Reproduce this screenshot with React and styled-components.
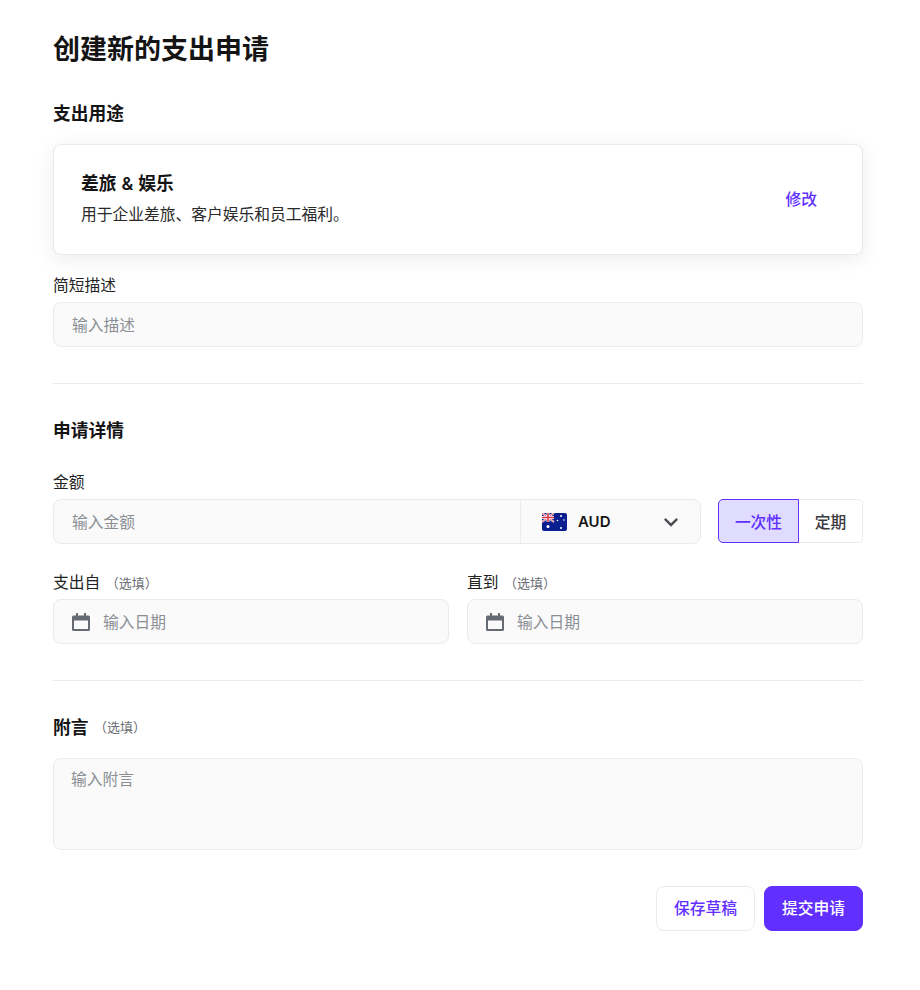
import React from 'react';
import styled, { createGlobalStyle } from 'styled-components';
import { MdKeyboardArrowDown } from 'react-icons/md';

const FONT = `Inter, "Noto Sans CJK SC", sans-serif`;

const GlobalStyle = createGlobalStyle`
  * { box-sizing: border-box; }
  body {
    margin: 0;
    background: #fff;
    color: #141414;
    font-family: ${FONT};
  }
  input, textarea, button { font-family: ${FONT}; }
  input::placeholder, textarea::placeholder { color: #8a8f94; opacity: 1; }
`;

const Page = styled.div`
  width: 920px;
  padding: 30px 57px 0 53px;
`;

const Title = styled.h1`
  margin: 0 0 31px;
  font-size: 27px;
  line-height: 40px;
  font-weight: 700;
`;

const SectionTitle = styled.h2`
  margin: 0;
  font-size: 17.75px;
  line-height: 26px;
  font-weight: 600;
`;

const Card = styled.div`
  display: flex;
  align-items: center;
  justify-content: space-between;
  height: 111px;
  margin-top: 17px;
  padding: 0 30px 0 27px;
  border: 1px solid #e9e9ee;
  border-radius: 8px;
  background: #fff;
  box-shadow: 0 4px 20px rgba(0, 0, 0, 0.08);
`;

const CardBody = styled.div`
  margin-bottom: 2px;
`;

const CardTitle = styled.div`
  font-size: 17.75px;
  line-height: 26px;
  font-weight: 600;
  word-spacing: 0.5px;
`;

const CardDesc = styled.div`
  margin-top: 7px;
  font-size: 15.75px;
  line-height: 22px;
  color: #2a2a2a;
`;

const LinkButton = styled.button`
  padding: 0 15px 2px;
  border: 0;
  background: none;
  color: #612fff;
  font-size: 15.75px;
  font-weight: 500;
`;

const Field = styled.div`
  display: flex;
  flex-direction: column;
  min-width: 0;
  flex: ${p => p.$flex || 'none'};
`;

const Label = styled.label`
  display: flex;
  align-items: baseline;
  height: 24px;
  margin: 2px 0 4px;
  font-size: 15.75px;
  line-height: 24px;
  color: #222;
`;

const Optional = styled.span`
  margin-left: 5.5px;
  font-size: 13px;
  color: #6a6e74;
`;

const InputBox = styled.div`
  display: flex;
  align-items: center;
  height: 45px;
  border: 1px solid #ebebef;
  border-radius: 8px;
  background: #fafafa;
  overflow: hidden;
`;

const TextInput = styled.input`
  flex: 1;
  min-width: 0;
  height: 100%;
  padding: 1px 18px 0;
  border: 0;
  outline: 0;
  background: none;
  font-size: 15.75px;
  color: #141414;
`;

const CurrencyPicker = styled.div`
  display: flex;
  align-items: center;
  width: 180px;
  height: 100%;
  padding: 0 15px 0 21px;
  border-left: 1px solid #ebebef;
  font-size: 15px;
  font-weight: 600;
  color: #141414;
`;

const CurrencyCode = styled.span`
  flex: 1;
  margin-left: 11px;
`;

const Chevron = styled(MdKeyboardArrowDown)`
  width: 28px;
  height: 28px;
  color: #4a4d52;
`;

const Divider = styled.hr`
  margin: 36px 0 34px;
  border: 0;
  border-top: 1px solid #e9e9ee;
`;

const Row = styled.div`
  display: flex;
  align-items: flex-start;
  gap: ${p => p.$gap || 18}px;
  margin-top: ${p => p.$top || 0}px;
`;

const Toggle = styled.div`
  display: flex;
  margin-top: 30px;
`;

const ToggleOption = styled.button`
  height: 44px;
  padding: 0;
  width: ${p => (p.$active ? 81 : 64)}px;
  border: 1px solid ${p => (p.$active ? '#612fff' : '#ebebef')};
  border-left-width: ${p => (p.$active ? 1 : 0)}px;
  border-radius: ${p => (p.$active ? '5px 0 0 5px' : '0 5px 5px 0')};
  background: ${p => (p.$active ? '#e0dcff' : '#fff')};
  color: ${p => (p.$active ? '#612fff' : '#3a3a40')};
  font-size: 15.75px;
  font-weight: 500;
`;

const IconSlot = styled.svg`
  flex: none;
  width: 18px;
  height: 18px;
  margin-left: 18px;
  color: #666b73;
`;

const DateInput = styled(TextInput)`
  padding: 1px 13px 0;
`;

const NoteHeading = styled.div`
  display: flex;
  align-items: center;
  margin-bottom: 17px;
  ${Optional} { margin-bottom: 3px; }
`;

const NoteArea = styled.textarea`
  display: block;
  width: 100%;
  height: 92px;
  padding: 10px 17px;
  border: 1px solid #ebebef;
  border-radius: 8px;
  outline: 0;
  resize: none;
  background: #fafafa;
  font-size: 15.75px;
  line-height: 22px;
`;

const Actions = styled.div`
  display: flex;
  justify-content: flex-end;
  gap: 9px;
  margin-top: 36px;
`;

const ActionButton = styled.button`
  height: 45px;
  padding: 0 17px 2px;
  border: 1px solid ${p => (p.$primary ? '#612fff' : '#ebebef')};
  border-radius: 8px;
  background: ${p => (p.$primary ? '#612fff' : '#fff')};
  color: ${p => (p.$primary ? '#fff' : '#612fff')};
  font-size: 15.75px;
  font-weight: 500;
`;

const CalendarIcon = () => (
  <IconSlot viewBox="0 0 18 18">
    <path
      fill="currentColor"
      fillRule="evenodd"
      d="M4 0h2v2.500h6V0h2v2.500h2.500A1.500 1.500 0 0 1 18 4v12.500a1.500 1.500 0 0 1-1.500 1.500h-15A1.500 1.500 0 0 1 0 16.500V4a1.500 1.500 0 0 1 1.500-1.500H4zM2 7.500V16h14V7.500z"
    />
  </IconSlot>
);

const AuFlag = () => (
  <svg width="25" height="18" viewBox="0 0 25 18">
    <rect width="25" height="18" rx="2" fill="#0a1f8f" />
    <path d="M0 0L12 9M12 0L0 9" stroke="#fff" strokeWidth="2" />
    <path d="M0 0L12 9M12 0L0 9" stroke="#e0344a" strokeWidth="0.8" />
    <path d="M6 0V9M0 4.5H12" stroke="#fff" strokeWidth="3" />
    <path d="M6 0V9M0 4.5H12" stroke="#e0344a" strokeWidth="1.6" />
    <g fill="#fff">
      <circle cx="6" cy="13.5" r="1.5" />
      <circle cx="19" cy="3" r="1" />
      <circle cx="15.5" cy="7.5" r="0.8" />
      <circle cx="22" cy="7" r="0.8" />
      <circle cx="19" cy="15" r="1" />
    </g>
  </svg>
);

export default function App() {
  return (
    <>
      <GlobalStyle />
      <Page>
        <Title>创建新的支出申请</Title>

        <SectionTitle>支出用途</SectionTitle>
        <Card>
          <CardBody>
            <CardTitle>差旅 &amp; 娱乐</CardTitle>
            <CardDesc>用于企业差旅、客户娱乐和员工福利。</CardDesc>
          </CardBody>
          <LinkButton>修改</LinkButton>
        </Card>

        <Row $top={17}>
          <Field $flex="1">
            <Label>简短描述</Label>
            <InputBox>
              <TextInput placeholder="输入描述" />
            </InputBox>
          </Field>
        </Row>

        <Divider />

        <SectionTitle>申请详情</SectionTitle>

        <Row $top={25} $gap={17}>
          <Field $flex="1">
            <Label>金额</Label>
            <InputBox>
              <TextInput placeholder="输入金额" />
              <CurrencyPicker>
                <AuFlag />
                <CurrencyCode>AUD</CurrencyCode>
                <Chevron />
              </CurrencyPicker>
            </InputBox>
          </Field>
          <Toggle>
            <ToggleOption $active>一次性</ToggleOption>
            <ToggleOption>定期</ToggleOption>
          </Toggle>
        </Row>

        <Row $top={25}>
          <Field $flex="1">
            <Label>支出自 <Optional>（选填）</Optional></Label>
            <InputBox>
              <CalendarIcon />
              <DateInput placeholder="输入日期" />
            </InputBox>
          </Field>
          <Field $flex="1">
            <Label>直到 <Optional>（选填）</Optional></Label>
            <InputBox>
              <CalendarIcon />
              <DateInput placeholder="输入日期" />
            </InputBox>
          </Field>
        </Row>

        <Divider />

        <NoteHeading>
          <SectionTitle>附言</SectionTitle>
          <Optional>（选填）</Optional>
        </NoteHeading>
        <NoteArea placeholder="输入附言" />

        <Actions>
          <ActionButton>保存草稿</ActionButton>
          <ActionButton $primary>提交申请</ActionButton>
        </Actions>
      </Page>
    </>
  );
}
